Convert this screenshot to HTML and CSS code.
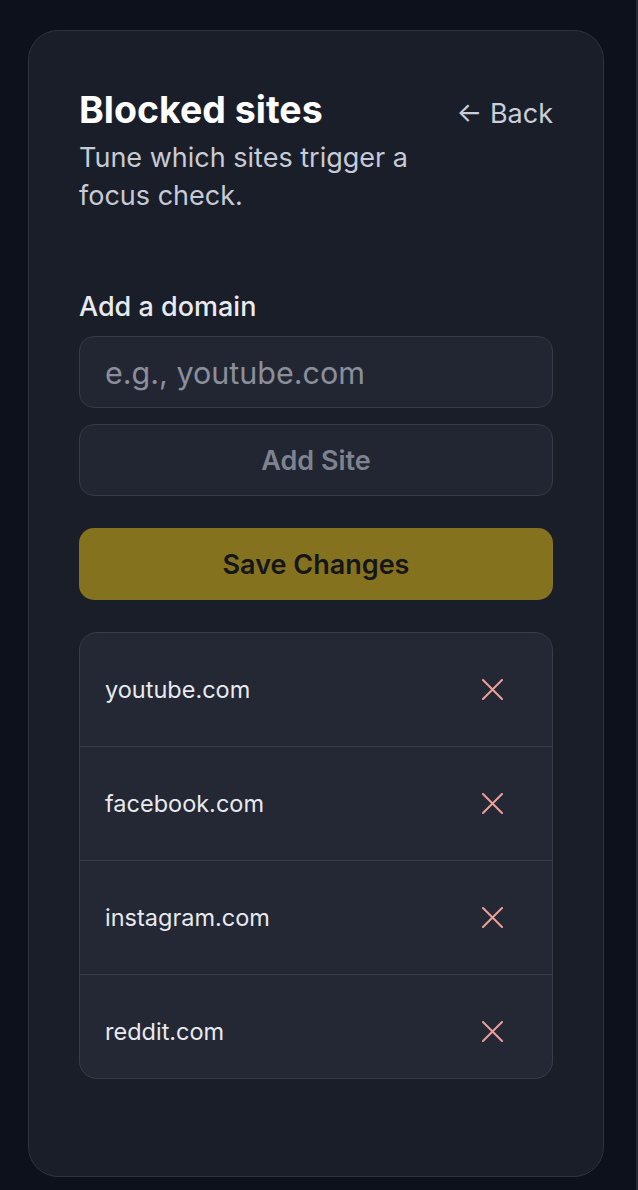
FILE: index.html
```html
<!DOCTYPE html>
<html lang="en">
<head>
<meta charset="utf-8">
<title>Blocked sites</title>
<link rel="stylesheet" href="styles.css">
</head>
<body>
<main class="card">
  <header class="header">
    <div class="heading">
      <h1 class="title">Blocked sites</h1>
      <p class="subtitle">Tune which sites trigger a focus check.</p>
    </div>
    <a class="back" href="#">&larr; Back</a>
  </header>

  <section class="form">
    <label class="label" for="domain">Add a domain</label>
    <input id="domain" class="input" type="text" placeholder="e.g., youtube.com">
    <button class="btn btn-add" type="button">Add Site</button>
    <button class="btn btn-save" type="button">Save Changes</button>
  </section>

  <ul class="list">
    <li class="row"><span class="domain">youtube.com</span><button class="remove" type="button" aria-label="Remove youtube.com"><svg viewBox="0 0 21 21" width="21" height="21"><path d="M1 1L20 20M20 1L1 20" stroke="currentColor" stroke-width="2" stroke-linecap="round"/></svg></button></li>
    <li class="row"><span class="domain">facebook.com</span><button class="remove" type="button" aria-label="Remove facebook.com"><svg viewBox="0 0 21 21" width="21" height="21"><path d="M1 1L20 20M20 1L1 20" stroke="currentColor" stroke-width="2" stroke-linecap="round"/></svg></button></li>
    <li class="row"><span class="domain">instagram.com</span><button class="remove" type="button" aria-label="Remove instagram.com"><svg viewBox="0 0 21 21" width="21" height="21"><path d="M1 1L20 20M20 1L1 20" stroke="currentColor" stroke-width="2" stroke-linecap="round"/></svg></button></li>
    <li class="row"><span class="domain">reddit.com</span><button class="remove" type="button" aria-label="Remove reddit.com"><svg viewBox="0 0 21 21" width="21" height="21"><path d="M1 1L20 20M20 1L1 20" stroke="currentColor" stroke-width="2" stroke-linecap="round"/></svg></button></li>
  </ul>
</main>
</body>
</html>
```

FILE: styles.css
```css
* { box-sizing: border-box; }

html, body {
  margin: 0;
  padding: 0;
  background: #0c111b;
}

body {
  font-family: Inter, "Noto Sans", "Liberation Sans", sans-serif;
  color: #e6e8ee;
  height: 1190px;
  overflow: hidden;
  padding-top: 30px;
  padding-left: 28px;
  border-right: 2px solid #262a33;
  width: 638px;
}

.card {
  width: 576px;
  height: 1147px;
  background: #1a1e29;
  border: 1px solid #2f333e;
  border-radius: 30px;
  padding: 59px 50px 0;
}

.header {
  display: flex;
  align-items: baseline;
  justify-content: space-between;
  gap: 24px;
}

.heading { flex: 1; min-width: 0; }

.title {
  margin: 0;
  font-size: 37.5px;
  line-height: 40px;
  font-weight: 700;
  color: #ffffff;
}

.subtitle {
  margin: 9px 0 0;
  font-size: 27px;
  line-height: 38px;
  color: #c6cbd7;
}

.back {
  font-size: 27px;
  line-height: 32px;
  color: #c9cedc;
  text-decoration: none;
  white-space: nowrap;
}

.form {
  display: flex;
  flex-direction: column;
  margin-top: 77px;
}

.label {
  font-size: 27px;
  line-height: 30px;
  font-weight: 500;
  color: #e8eaf0;
  margin-bottom: 14px;
}

.input {
  height: 72px;
  width: 100%;
  background: #222633;
  border: 1px solid #373b47;
  border-radius: 15px;
  padding: 0 25px;
  font-family: inherit;
  font-size: 30.5px;
  color: #e6e8ee;
  outline: none;
}

.input::placeholder { color: #8a8f9b; }

.btn {
  height: 72px;
  width: 100%;
  border-radius: 15px;
  font-family: inherit;
  font-size: 27px;
  font-weight: 600;
  cursor: pointer;
}

.btn-add {
  margin-top: 16px;
  background: #222633;
  border: 1px solid #373b47;
  color: #7e838f;
}

.btn-save {
  margin-top: 32px;
  background: #85721f;
  border: none;
  color: #14161b;
}

.list {
  list-style: none;
  margin: 32px 0 0;
  padding: 0;
  height: 447px;
  overflow: hidden;
  background: #232834;
  border: 1px solid #383c48;
  border-radius: 18px;
}

.row {
  display: flex;
  align-items: center;
  justify-content: space-between;
  height: 114px;
  padding: 0 49px 0 25px;
  border-bottom: 1px solid #383c48;
}

.domain {
  font-size: 23.5px;
  line-height: 30px;
  color: #e8eaf0;
}

.remove {
  display: flex;
  padding: 0;
  border: none;
  background: none;
  color: #ee9f99;
  cursor: pointer;
}
```
